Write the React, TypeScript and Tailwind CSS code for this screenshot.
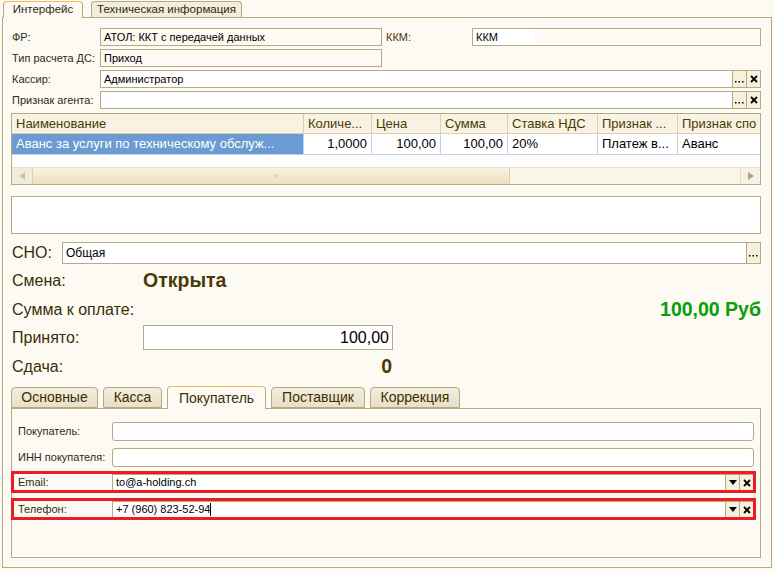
import React from "react"

const font = "font-['Liberation_Sans',Arial,sans-serif]"

function Btn({ children }: { children: React.ReactNode }) {
  return (
    <div className="w-[14px] h-full flex items-center justify-center bg-[#f6f0dc] border-l border-[#b5aa84] text-black leading-none">
      {children}
    </div>
  )
}

function DotsBtn() {
  return (
    <Btn>
      <svg width="9" height="10" viewBox="0 0 9 10">
        <rect x="0" y="7" width="1.5" height="1.5" fill="#000" />
        <rect x="3.5" y="7" width="1.5" height="1.5" fill="#000" />
        <rect x="7" y="7" width="1.5" height="1.5" fill="#000" />
      </svg>
    </Btn>
  )
}

function XBtn() {
  return (
    <Btn>
      <svg width="8" height="8" viewBox="0 0 8 8">
        <path d="M1 1 L7 7 M7 1 L1 7" stroke="#000" strokeWidth="1.8" />
      </svg>
    </Btn>
  )
}

function ArrowBtn() {
  return (
    <Btn>
      <svg width="8" height="5" viewBox="0 0 8 5">
        <path d="M0 0 H8 L4 5 Z" fill="#000" />
      </svg>
    </Btn>
  )
}

function TopRow({ label, children }: { label: string; children: React.ReactNode }) {
  return (
    <div className="flex items-center h-[18px]">
      <div className="w-[89px] pl-[1px] text-[11px] text-[#2f2a10] whitespace-nowrap">{label}</div>
      {children}
    </div>
  )
}

const cols = [
  { t: "Наименование", w: "w-[292px]" },
  { t: "Количе...", w: "w-[68px]" },
  { t: "Цена", w: "w-[69px]" },
  { t: "Сумма", w: "w-[67px]" },
  { t: "Ставка НДС", w: "w-[90px]" },
  { t: "Признак ...", w: "w-[80px]" },
  { t: "Признак спо", w: "w-[81px]" },
]

function Table() {
  const row = [
    { t: "Аванс за услуги по техническому обслуж...", right: false, sel: true },
    { t: "1,0000", right: true },
    { t: "100,00", right: true },
    { t: "100,00", right: true },
    { t: "20%", right: false },
    { t: "Платеж в...", right: false },
    { t: "Аванс", right: false },
  ]
  return (
    <div className="mt-[4px] h-[72px] border border-[#b5aa84] bg-white flex flex-col overflow-hidden">
      <div className="flex h-[20px] bg-[#f7f2e1] border-b border-[#d9d0b0]">
        {cols.map((c, i) => (
          <div
            key={i}
            className={`${c.w} shrink-0 h-full flex items-center px-[4px] text-[13px] text-[#4a3a06] whitespace-nowrap overflow-hidden ${i < cols.length - 1 ? "border-r border-[#d9d0b0]" : ""}`}
          >
            {c.t}
          </div>
        ))}
      </div>
      <div className="flex h-[21px] border-b border-[#c3d2e6]">
        {row.map((c, i) => (
          <div
            key={i}
            className={`${cols[i].w} shrink-0 h-full flex items-center px-[4px] text-[13px] whitespace-nowrap overflow-hidden ${c.sel ? "bg-[#6b9bd2] text-white" : "bg-white text-black"} ${c.right ? "justify-end" : "justify-start"} ${i < cols.length - 1 ? "border-r border-[#c3d2e6]" : ""}`}
          >
            {c.t}
          </div>
        ))}
      </div>
      <div className="flex-1" />
      <div className="h-[17px] flex border-t border-[#e6dfc8] bg-[#faf6ea]">
        <div className="w-[21px] h-full border-r border-[#d9d0b0] bg-[#f1ebd7] flex items-center justify-center">
          <svg width="6" height="8" viewBox="0 0 6 8">
            <path d="M6 0 V8 L0 4 Z" fill="#c9c4b4" />
          </svg>
        </div>
        <div className="w-[477px] h-full bg-gradient-to-b from-[#f8f3e2] to-[#ebe1c2] border-r border-[#d9d0b0] flex items-center justify-center">
          <div className="w-[4px] h-[4px] rounded-full border border-[#d6ceb3] ml-[10px]" />
        </div>
        <div className="flex-1" />
        <div className="w-[20px] h-full border-l border-[#e3dcc4] bg-[#f7f2e3] flex items-center justify-center">
          <svg width="6" height="8" viewBox="0 0 6 8">
            <path d="M0 0 V8 L6 4 Z" fill="#a9a497" />
          </svg>
        </div>
      </div>
    </div>
  )
}

function Tab({ label, active, w }: { label: string; active?: boolean; w: string }) {
  return (
    <div
      className={`${w} rounded-t-[4px] border border-[#b5aa84] flex items-center justify-center text-[14px] text-[#3a2e06] ${active ? "h-[23px] bg-[#fdfaf4] border-b-0 border-t-[#f2b85a] relative -mb-px z-10" : "h-[21px] bg-gradient-to-b from-[#f3eedc] to-[#e8e0c6]"}`}
    >
      {label}
    </div>
  )
}

function BottomRow({ label, children }: { label: string; children: React.ReactNode }) {
  return (
    <div className="flex items-center h-[19px]">
      <div className="w-[100px] pl-[6px] text-[11px] text-[#2f2a10] whitespace-nowrap">{label}</div>
      {children}
    </div>
  )
}

function RedRow({ label, value, caret }: { label: string; value: string; caret?: boolean }) {
  return (
    <div className="-ml-px mr-[4px] h-[22px] border-[3px] border-[#ec1c24] flex items-center">
      <div className="w-[98px] pl-[4px] text-[11px] text-[#2f2a10] whitespace-nowrap">{label}</div>
      <div className="w-[641px] h-full flex border-l border-t border-[#b5aa84] bg-white">
        <div className="flex-1 flex items-center pl-[3px] text-[11px] text-black">
          {value}
          {caret && <span className="inline-block w-px h-[13px] bg-black" />}
        </div>
        <ArrowBtn />
        <XBtn />
      </div>
    </div>
  )
}

export default function App() {
  return (
    <div className={`w-[774px] h-[571px] bg-[#fdfaf4] ${font} flex flex-col overflow-hidden`}>
      {/* top tabs */}
      <div className="flex items-end h-[17px] pl-[3px] gap-[8px]">
        <div className="w-[80px] h-[17px] rounded-t-[4px] border border-b-0 border-[#b5aa84] border-t-[#f2b85a] bg-[#fdfaf4] flex items-center justify-center text-[11.5px] text-[#2f2a10] relative z-10 -mb-px">
          Интерфейс
        </div>
        <div className="w-[151px] h-[16px] rounded-t-[4px] border border-b-0 border-[#b5aa84] bg-[#f3eedb] flex items-center justify-center text-[11.5px] text-[#2f2a10]">
          Техническая информация
        </div>
      </div>

      {/* main panel */}
      <div className="ml-[2px] w-[770px] h-[551px] border border-[#b5aa84] pl-[8px] pr-[10px] flex flex-col">
        <div className="mt-[10px] flex flex-col gap-[3px]">
          <TopRow label="ФР:">
            <div className="w-[282px] h-full border border-[#b5aa84] flex items-center pl-[3px] text-[11px] text-black">
              АТОЛ: ККТ с передачей данных
            </div>
            <div className="w-[90px] pl-[4px] text-[11px] text-[#4a3a06]">ККМ:</div>
            <div className="flex-1 h-full border border-[#b5aa84] flex">
              <div className="w-[62px] h-full bg-white flex items-center pl-[3px] text-[11px] text-black">ККМ</div>
            </div>
          </TopRow>
          <TopRow label="Тип расчета ДС:">
            <div className="w-[282px] h-full border border-[#b5aa84] flex items-center pl-[3px] text-[11px] text-black">
              Приход
            </div>
          </TopRow>
          <TopRow label="Кассир:">
            <div className="flex-1 h-full border border-[#b5aa84] bg-white flex">
              <div className="flex-1 flex items-center pl-[3px] text-[11px] text-black">Администратор</div>
              <DotsBtn />
              <XBtn />
            </div>
          </TopRow>
          <TopRow label="Признак агента:">
            <div className="flex-1 h-full border border-[#b5aa84] bg-white flex">
              <div className="flex-1" />
              <DotsBtn />
              <XBtn />
            </div>
          </TopRow>
        </div>

        <Table />

        <div className="mt-[11px] h-[38px] border border-[#b5aa84] bg-white" />

        {/* СНО */}
        <div className="mt-[8px] flex items-center h-[22px]">
          <div className="w-[51px] pl-[1px] text-[16px] text-[#3a2e06]">СНО:</div>
          <div className="flex-1 h-full border border-[#b5aa84] bg-white flex">
            <div className="flex-1 flex items-center pl-[3px] text-[12px] text-black">Общая</div>
            <DotsBtn />
          </div>
        </div>

        <div className="mt-[6px] flex items-center h-[22px]">
          <div className="w-[132px] pl-[1px] text-[16px] text-[#3a2e06]">Смена:</div>
          <div className="text-[19.5px] font-bold text-[#4a3a06]">Открыта</div>
        </div>

        <div className="mt-[7px] flex items-center justify-between h-[22px]">
          <div className="pl-[1px] text-[16px] text-[#3a2e06]">Сумма к оплате:</div>
          <div className="text-[19.5px] font-bold text-[#0a9e0a]">100,00 Руб</div>
        </div>

        <div className="mt-[4px] flex items-center h-[25px]">
          <div className="w-[132px] pl-[1px] text-[16px] text-[#3a2e06]">Принято:</div>
          <div className="w-[250px] h-full border border-[#b5aa84] bg-white flex items-center justify-end pr-[3px] text-[16px] text-black">
            100,00
          </div>
        </div>

        <div className="mt-[5px] flex items-center h-[24px]">
          <div className="w-[132px] pl-[1px] text-[16px] text-[#3a2e06]">Сдача:</div>
          <div className="w-[250px] text-right pr-[1px] text-[19.5px] font-bold text-[#4a3a06]">0</div>
        </div>

        {/* bottom tabs */}
        <div className="mt-[7px] flex items-end h-[22px] gap-[5px]">
          <Tab label="Основные" w="w-[87px]" />
          <Tab label="Касса" w="w-[59px]" />
          <Tab label="Покупатель" w="w-[99px]" active />
          <Tab label="Поставщик" w="w-[94px]" />
          <Tab label="Коррекция" w="w-[90px]" />
        </div>
        <div className="h-[150px] border border-[#b5aa84] flex flex-col">
          <div className="mt-[13px] flex flex-col gap-[7px] pr-[6px]">
            <BottomRow label="Покупатель:">
              <div className="flex-1 h-full rounded-[3px] border border-[#b5aa84] bg-white" />
            </BottomRow>
            <BottomRow label="ИНН покупателя:">
              <div className="flex-1 h-full rounded-[3px] border border-[#b5aa84] bg-white" />
            </BottomRow>
          </div>
          <div className="mt-[4px] flex flex-col gap-[5px]">
            <RedRow label="Email:" value="to@a-holding.ch" />
            <RedRow label="Телефон:" value="+7 (960) 823-52-94" caret />
          </div>
        </div>
      </div>
    </div>
  )
}
